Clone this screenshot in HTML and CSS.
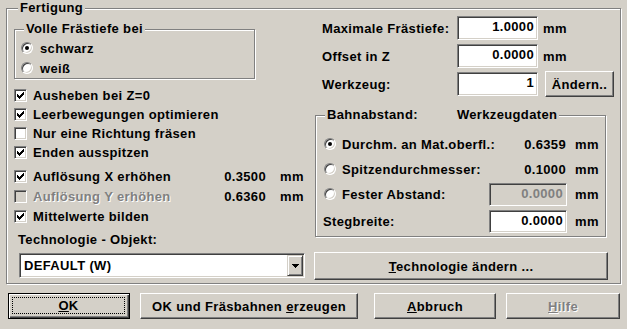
FILE: index.html
```html
<!DOCTYPE html>
<html lang="de">
<head>
  <meta charset="UTF-8">
  <title>Fertigung</title>
  <link rel="stylesheet" href="styles.css">
</head>
<body>
  <div class="dialog">
    <!-- Fertigung group -->
    <div class="group outer">
      <div class="group-title">Fertigung</div>
      <div class="columns">

        <!-- Left column -->
        <div class="col-left">
          <div class="group depth">
            <div class="group-title">Volle Frästiefe bei</div>
            <div class="radio-row first"><span class="radio checked"></span>schwarz</div>
            <div class="radio-row"><span class="radio"></span>weiß</div>
          </div>

          <div class="checks">
            <div class="check-row">
              <span class="check"><svg width="7" height="7" viewBox="0 0 7 7"><path d="M0 2h1v1h1v1h1v-1h1v-1h1v-1h1v-1h1v3h-1v1h-1v1h-1v1h-1v1h-1v-1h-1v-1h-1z"/></svg></span>
              Ausheben bei Z=0
            </div>
            <div class="check-row">
              <span class="check"><svg width="7" height="7" viewBox="0 0 7 7"><path d="M0 2h1v1h1v1h1v-1h1v-1h1v-1h1v-1h1v3h-1v1h-1v1h-1v1h-1v1h-1v-1h-1v-1h-1z"/></svg></span>
              Leerbewegungen optimieren
            </div>
            <div class="check-row">
              <span class="check"></span>
              Nur eine Richtung fräsen
            </div>
            <div class="check-row">
              <span class="check"><svg width="7" height="7" viewBox="0 0 7 7"><path d="M0 2h1v1h1v1h1v-1h1v-1h1v-1h1v-1h1v3h-1v1h-1v1h-1v1h-1v1h-1v-1h-1v-1h-1z"/></svg></span>
              Enden ausspitzen
            </div>
          </div>

          <div class="checks wide">
            <div class="check-row">
              <span class="check"><svg width="7" height="7" viewBox="0 0 7 7"><path d="M0 2h1v1h1v1h1v-1h1v-1h1v-1h1v-1h1v3h-1v1h-1v1h-1v1h-1v1h-1v-1h-1v-1h-1z"/></svg></span>
              <span class="check-label">Auflösung X erhöhen</span>
              <span class="value">0.3500</span>
              <span class="unit">mm</span>
            </div>
            <div class="check-row">
              <span class="check disabled-box"></span>
              <span class="check-label disabled">Auflösung Y erhöhen</span>
              <span class="value">0.6360</span>
              <span class="unit">mm</span>
            </div>
            <div class="check-row">
              <span class="check"><svg width="7" height="7" viewBox="0 0 7 7"><path d="M0 2h1v1h1v1h1v-1h1v-1h1v-1h1v-1h1v3h-1v1h-1v1h-1v1h-1v1h-1v-1h-1v-1h-1z"/></svg></span>
              Mittelwerte bilden
            </div>
          </div>

          <div class="tech-label">Technologie - Objekt:</div>
          <div class="combo">
            <span class="combo-text">DEFAULT (W)</span>
            <span class="combo-btn"><svg width="7" height="4" viewBox="0 0 7 4"><path d="M0 0h7v1h-1v1h-1v1h-1v1h-1v-1h-1v-1h-1v-1h-1z"/></svg></span>
          </div>
        </div>

        <!-- Right column -->
        <div class="col-right">
          <div class="field-row row1">
            <span>Maximale Frästiefe:</span>
            <span class="edit">1.0000</span>
            <span class="unit-after">mm</span>
          </div>
          <div class="field-row row2">
            <span>Offset in Z</span>
            <span class="edit">0.0000</span>
            <span class="unit-after">mm</span>
          </div>
          <div class="field-row row3">
            <span>Werkzeug:</span>
            <span class="edit">1</span>
            <span class="button small">Ändern..</span>
          </div>

          <div class="group spacing">
            <div class="group-title"><span>Bahnabstand:</span><span class="title-right">Werkzeugdaten</span></div>
            <div class="opt-row first">
              <span class="opt-label"><span class="radio checked"></span>Durchm. an Mat.oberfl.:</span>
              <span class="value-right">0.6359</span>
              <span>mm</span>
            </div>
            <div class="opt-row">
              <span class="opt-label"><span class="radio"></span>Spitzendurchmesser:</span>
              <span class="value-right">0.1000</span>
              <span>mm</span>
            </div>
            <div class="opt-row">
              <span class="opt-label"><span class="radio"></span>Fester Abstand:</span>
              <span class="edit disabled-edit">0.0000</span>
              <span>mm</span>
            </div>
            <div class="opt-row last">
              <span class="opt-label plain">Stegbreite:</span>
              <span class="edit">0.0000</span>
              <span>mm</span>
            </div>
          </div>

          <div class="button tech-btn"><span><u>T</u>echnologie ändern ...</span></div>
        </div>

      </div>
    </div>

    <!-- Dialog buttons -->
    <div class="buttons">
      <div class="button default btn-ok"><span class="focus"><u>O</u>K</span></div>
      <div class="button btn-create"><span>OK und Fräsbahnen <u>e</u>rzeugen</span></div>
      <div class="button btn-cancel"><span><u>A</u>bbruch</span></div>
      <div class="button btn-help disabled"><span><u>H</u>ilfe</span></div>
    </div>
  </div>
</body>
</html>
```

FILE: styles.css
```css
body {
  margin: 0;
  width: 627px;
  height: 329px;
  overflow: hidden;
  background: #d4d0c8;
  font-family: "Liberation Sans", Arial, sans-serif;
  font-size: 13px;
  font-weight: bold;
  line-height: 15px;
  letter-spacing: 0.35px;
  color: #000;
  white-space: nowrap;
}

/* etched group boxes */
.group {
  box-sizing: border-box;
  border: 1px solid #808080;
  box-shadow: inset 1px 1px 0 #fff, 1px 1px 0 #fff;
}
.group-title {
  width: fit-content;
  margin-top: -9px;
  padding: 0 2px;
  background: #d4d0c8;
}
.outer {
  width: 615px;
  margin: 8px 0 0 6px;
  padding: 0 6px 3px 7px;
}
.outer > .group-title {
  margin-left: 4px;
}
.columns {
  display: grid;
  grid-template-columns: 291px 300px;
  column-gap: 9px;
}

/* left column */
.depth {
  width: 241px;
  margin-top: 14px;
}
.depth .group-title {
  margin-left: 9px;
}
.radio-row {
  display: flex;
  align-items: center;
  height: 20px;
  padding-left: 6px;
}
.radio-row.first {
  margin-top: 2px;
}
.radio-row .radio {
  margin-right: 7px;
}

.radio {
  box-sizing: border-box;
  display: inline-flex;
  align-items: center;
  justify-content: center;
  width: 12px;
  height: 12px;
  border-radius: 50%;
  background: #fff;
  border: 1px solid;
  border-color: #808080 #fff #fff #808080;
  box-shadow: inset 1px 1px 0 #404040, inset -1px -1px 0 #d4d0c8;
  flex: none;
}
.radio.checked::after {
  content: "";
  width: 4px;
  height: 4px;
  border-radius: 50%;
  background: #000;
}

.checks {
  margin-top: 7px;
}
.checks.wide {
  margin-top: 4px;
}
.check-row {
  display: flex;
  align-items: center;
  height: 19px;
}
.checks.wide .check-row {
  height: 20px;
}
.check {
  box-sizing: border-box;
  display: inline-flex;
  align-items: center;
  justify-content: center;
  width: 13px;
  height: 13px;
  margin-right: 6px;
  background: #fff;
  border: 1px solid;
  border-color: #808080 #fff #fff #808080;
  box-shadow: inset 1px 1px 0 #404040, inset -1px -1px 0 #d4d0c8;
  flex: none;
}
.check svg {
  display: block;
}
.check.disabled-box {
  background: #d4d0c8;
}
.check-label {
  flex: 1;
}
.value {
  width: 60px;
  text-align: right;
}
.unit {
  width: 25px;
  margin-left: 14px;
}
.disabled {
  color: #808080;
  text-shadow: 1px 1px 0 #fff;
}

.tech-label {
  margin: 6px 0 0 4px;
}
.combo {
  box-sizing: border-box;
  display: flex;
  width: 286px;
  height: 25px;
  margin: 6px 0 0 5px;
  background: #fff;
  border: 1px solid;
  border-color: #808080 #fff #fff #808080;
  box-shadow: inset 1px 1px 0 #404040, inset -1px -1px 0 #d4d0c8;
  padding: 1px;
}
.combo-text {
  flex: 1;
  padding-left: 3px;
  line-height: 21px;
}
.combo-btn {
  box-sizing: border-box;
  display: flex;
  align-items: center;
  justify-content: center;
  width: 16px;
  background: #d4d0c8;
  border: 1px solid;
  border-color: #d4d0c8 #404040 #404040 #d4d0c8;
  box-shadow: inset 1px 1px 0 #fff, inset -1px -1px 0 #808080;
}

/* right column */
.field-row {
  display: grid;
  grid-template-columns: 135px 81px 1fr;
  align-items: center;
  height: 24px;
  padding-left: 8px;
}
.row1 {
  margin-top: 1px;
}
.row2 {
  margin-top: 4px;
}
.row3 {
  height: 26px;
  margin-top: 3px;
}
.unit-after {
  margin-left: 5px;
}
.edit {
  box-sizing: border-box;
  height: 24px;
  padding-right: 3px;
  text-align: right;
  line-height: 20px;
  background: #fff;
  border: 1px solid;
  border-color: #808080 #fff #fff #808080;
  box-shadow: inset 1px 1px 0 #404040, inset -1px -1px 0 #d4d0c8;
}
.disabled-edit {
  background: #d4d0c8;
  color: #808080;
}

.button {
  box-sizing: border-box;
  display: flex;
  align-items: center;
  justify-content: center;
  background: #d4d0c8;
  border: 1px solid;
  border-color: #fff #404040 #404040 #fff;
  box-shadow: inset -1px -1px 0 #808080;
}
.button.small {
  width: 69px;
  height: 26px;
  margin-left: 7px;
}

.spacing {
  width: 291px;
  margin: 18px 0 0 1px;
  padding: 0 6px 3px 8px;
}
.spacing .group-title {
  margin-left: 1px;
}
.title-right {
  margin-left: 39px;
}
.opt-row {
  display: grid;
  grid-template-columns: 157px 78px 24px;
  column-gap: 8px;
  align-items: center;
  height: 24px;
  margin-top: 1px;
}
.opt-row.first {
  margin-top: 10px;
}
.opt-row.last {
  margin-top: 3px;
}
.opt-row .edit {
  height: 23px;
  line-height: 19px;
}
.opt-label {
  display: flex;
  align-items: center;
}
.opt-label .radio {
  margin-right: 6px;
}
.opt-label.plain {
  margin-left: -1px;
}
.value-right {
  text-align: right;
  padding-right: 1px;
}

.tech-btn {
  width: 294px;
  height: 28px;
  margin-top: 15px;
}

/* dialog buttons */
.buttons {
  display: flex;
  margin-top: 9px;
  padding-left: 8px;
}
.buttons .button {
  height: 26px;
}
.btn-ok {
  width: 122px;
}
.button.default {
  border: 1px solid #000;
  box-shadow: inset 1px 1px 0 #fff, inset -1px -1px 0 #404040, inset -2px -2px 0 #808080;
  padding: 3px 4px 4px 3px;
}
.focus {
  box-sizing: border-box;
  display: flex;
  align-items: center;
  justify-content: center;
  width: 100%;
  height: 100%;
  border: 1px dotted #000;
}
.btn-create {
  width: 218px;
  margin-left: 10px;
}
.btn-cancel {
  width: 122px;
  margin-left: 16px;
}
.btn-help {
  width: 114px;
  margin-left: 10px;
}
```
